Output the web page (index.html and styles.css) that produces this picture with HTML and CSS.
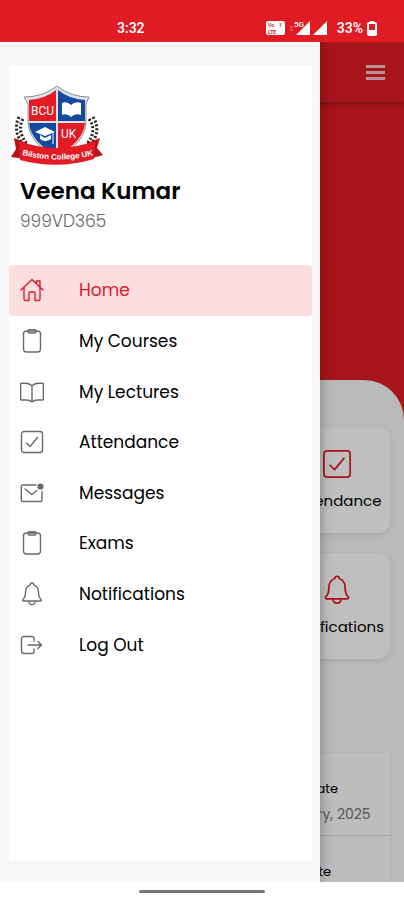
FILE: index.html
```html
<!DOCTYPE html>
<html lang="en">
<head>
    <meta charset="UTF-8">
    <meta name="viewport" content="width=device-width, initial-scale=1">
    <title>Student Portal</title>
    <link rel="stylesheet" href="styles.css">
</head>
<body>
<!-- shared icons -->
<svg class="sprite" aria-hidden="true">
    <symbol id="home" viewBox="0 0 24 24">
        <path d="M1 12 L12 1.500 L23 12 M4 9.500 V21 Q4 22.500 5.500 22.500 H9 V15 Q9 14 10 14 H14 Q15 14 15 15 V22.500 H18.500 Q20 22.500 20 21 V9.500 M16.500 5.500 V3 H20 V9"/>
    </symbol>
    <symbol id="clipboard" viewBox="0 0 24 24">
        <rect x="3.500" y="2" width="17" height="21" rx="3"/>
        <path d="M8 2 Q8 .7 9.500 .7 H14.500 Q16 .7 16 2 V2.500 Q16 4 14.500 4 H9.500 Q8 4 8 2.500 Z"/>
    </symbol>
    <symbol id="book" viewBox="0 0 24 24">
        <path d="M12 6 Q10 3.200 5 3.200 H1.500 Q.6 3.200 .6 4 V19 Q.6 20 1.500 20 H6 Q10 20 12 22 Q14 20 18 20 H22.500 Q23.400 20 23.400 19 V4 Q23.400 3.200 22.500 3.200 H19 Q14 3.200 12 6 V22"/>
    </symbol>
    <symbol id="check" viewBox="0 0 24 24">
        <rect x="1.500" y="1.500" width="21" height="21" rx="2.500"/>
        <path d="M6.500 13 L10 16.500 L17.500 7.500"/>
    </symbol>
    <symbol id="mail" viewBox="0 0 24 24">
        <path d="M16 4 H2.500 Q1.300 4 1.300 5.200 V19 Q1.300 20.500 2.800 20.500 H20.500 Q22 20.500 22 19 V10.500 M5 8 L11.700 13.500 L17 9.500"/>
        <circle cx="20.500" cy="5.500" r="2.400" fill="currentColor"/>
    </symbol>
    <symbol id="bell" viewBox="0 0 24 24">
        <path d="M10.200 2.800 Q10.200 1 12 1 Q13.800 1 13.800 2.800 Q18.500 4.500 18.500 10 Q18.500 15.500 21 17.300 Q21.500 19 20.500 19 H3.500 Q2.500 19 3 17.300 Q5.500 15.500 5.500 10 Q5.500 4.500 10.200 2.800 Z M8.700 19 Q8.900 22.500 12 22.500 Q15.100 22.500 15.300 19"/>
    </symbol>
    <symbol id="logout" viewBox="0 0 24 24">
        <path d="M14 8 V5.500 Q14 3.500 12 3.500 H4 Q1.500 3.500 1.500 6 V18 Q1.500 20.500 4 20.500 H12 Q14 20.500 14 18.500 V16 M8 12 H21.500 M18 8.500 L21.500 12 L18 15.500"/>
    </symbol>
</svg>

<div class="phone">
    <div class="status">
        <span class="time">3:32</span>
        <svg class="signals" viewBox="0 0 64 18" aria-hidden="true">
            <rect x="1" y="2" width="19" height="14" rx="2" fill="#fff"/>
            <g fill="#e01b24" font-size="5" font-weight="700">
                <text x="3" y="8">Vo</text>
                <text x="14" y="8">1</text>
                <text x="3" y="15">LTE</text>
            </g>
            <path d="M25 8h3M25 11h3" stroke="#f0858a"/>
            <path d="M45 2V16H31Z M62 2V16H48Z" fill="#fff"/>
            <text x="29" y="8" fill="#fff" font-size="8">5G</text>
        </svg>
        <span class="percent">33%</span>
        <svg class="battery" viewBox="0 0 10 15" aria-hidden="true">
            <path d="M3 0h4v2h-4z M1 9h8v5h-8z" fill="#fff"/>
            <rect x="1" y="2" width="8" height="12" rx="1" fill="none" stroke="#fff" stroke-width="2"/>
        </svg>
    </div>

    <div class="screen">
        <header class="topbar">
            <button class="menu" type="button" aria-label="Menu"><i></i><i></i><i></i></button>
        </header>
        <main class="sheet">
            <div class="tiles">
                <a class="tile" href="#"><svg><use href="#check"/></svg>Attendance</a>
                <a class="tile" href="#"><svg><use href="#bell"/></svg>Notifications</a>
            </div>
            <dl class="dates">
                <div class="date">
                    <dt>Start Date</dt>
                    <dd>January, 2025</dd>
                </div>
                <div class="date">
                    <dt>End Date</dt>
                </div>
            </dl>
        </main>
        <div class="scrim"></div>

        <aside class="drawer">
            <div class="panel">
                <svg class="logo" viewBox="0 0 92 80" role="img" aria-label="Bilston College UK">
                    <!-- laurel -->
                    <g fill="none" stroke="#222" stroke-width="3" stroke-dasharray="2 2">
                        <path d="M8 31 Q1 45 13 60"/>
                        <path d="M12 33 Q5 45 17 59"/>
                        <path d="M82 31 Q91 45 79 60"/>
                        <path d="M78 33 Q87 45 75 59"/>
                    </g>
                    <!-- shield -->
                    <path d="M46 0 Q60 11 78 11 L75 18 V34 Q75 57 46 72 Q17 57 17 34 V18 L13 11 Q32 11 46 0Z" fill="#dfe1e5" stroke="#8b9097"/>
                    <path d="M45 4 Q34 13 18 14 V35 H45Z" fill="#e31b25"/>
                    <path d="M47 4 Q58 13 74 14 V35 H47Z" fill="#134a9f"/>
                    <path d="M18 37 H45 V69 Q20 56 18 37Z" fill="#134a9f"/>
                    <path d="M47 37 H74 Q72 56 47 69Z" fill="#e31b25"/>
                    <text x="20" y="29" class="crest">BCU</text>
                    <text x="50" y="52" class="crest">UK</text>
                    <path d="M51 17 Q56 15 60 19 Q64 15 70 17 V29 Q64 27 60 31 Q56 27 51 29Z" fill="#fff"/>
                    <path d="M24 46 L34 41 L44 46 L34 50Z M29 49 L34 52 L40 49 V53 Q34 57 29 53Z" fill="#fff"/>
                    <path d="M42 47 V58" stroke="#fff"/>
                    <!-- ribbon -->
                    <path d="M3 52 L16 57 L14 73 L0 71 L5 63Z M89 52 L76 57 L78 73 L92 69 L86 62Z" fill="#b9141c"/>
                    <path d="M8 55 Q46 69 84 55 L83 73 Q46 84 9 74Z" fill="#e31b25"/>
                    <path id="arc" d="M11 69 Q46 78 83 69" fill="none"/>
                    <text class="motto"><textPath href="#arc">Bilston College UK</textPath></text>
                </svg>
                <h1 class="name">Veena Kumar</h1>
                <p class="number">999VD365</p>
                <nav class="links">
                    <a class="current" href="#"><svg><use href="#home"/></svg>Home</a>
                    <a href="#"><svg><use href="#clipboard"/></svg>My Courses</a>
                    <a href="#"><svg><use href="#book"/></svg>My Lectures</a>
                    <a href="#"><svg><use href="#check"/></svg>Attendance</a>
                    <a href="#"><svg><use href="#mail"/></svg>Messages</a>
                    <a href="#"><svg><use href="#clipboard"/></svg>Exams</a>
                    <a href="#"><svg><use href="#bell"/></svg>Notifications</a>
                    <a href="#"><svg><use href="#logout"/></svg>Log Out</a>
                </nav>
            </div>
        </aside>
    </div>
    <div class="gesture"><i></i></div>
</div>
</body>
</html>
```
FILE: styles.css
```css
* {
    margin: 0;
    padding: 0;
    box-sizing: border-box;
}

body {
    font-family: Poppins, Inter, "Liberation Sans", sans-serif;
    font-weight: 400;
    color: #000;
    background-color: #fff;
}

a {
    color: inherit;
    text-decoration: none;
}

.sprite {
    position: absolute;
    width: 0;
    height: 0;
}

.phone {
    display: flex;
    flex-direction: column;
    height: 100vh;
}

/* status bar */
.status {
    flex: none;
    display: flex;
    align-items: center;
    height: 42px;
    padding: 14px 27px 0 117px;
    background-color: #e01b24;
    color: #fff;
    font-family: Roboto, sans-serif;
    font-size: 14px;
    font-weight: 500;
}

.time {
    margin-right: auto;
}

.signals {
    width: 64px;
    height: 18px;
    margin-right: 8px;
}

.battery {
    width: 10px;
    height: 15px;
    margin-left: 4px;
}

/* page behind the drawer */
.screen {
    position: relative;
    flex: 1;
    display: flex;
    flex-direction: column;
    background-color: #e01b24;
    overflow: hidden;
}

.topbar {
    flex: none;
    display: flex;
    align-items: center;
    justify-content: flex-end;
    height: 60px;
    padding: 0 19px;
    box-shadow: 0 2px 4px rgba(0, 0, 0, .3);
}

.menu {
    display: grid;
    gap: 3px;
    border: 0;
    background: none;
}

.menu i {
    width: 19px;
    height: 3px;
    background-color: #f6c4c7;
}

.sheet {
    flex: 1 0 auto;
    margin-top: 278px;
    padding: 47px 14px 0;
    background-color: #f8f8f8;
    border-radius: 40px 40px 0 0;
}

.tiles {
    display: grid;
    grid-template-columns: repeat(3, 1fr);
    gap: 20px 30px;
}

.tile {
    grid-column: 3;
    display: flex;
    flex-direction: column;
    align-items: center;
    gap: 10px;
    height: 106px;
    padding-top: 22px;
    border-radius: 12px;
    background-color: #fff;
    box-shadow: 0 2px 6px rgba(0, 0, 0, .1);
    font-size: 15px;
    line-height: 24px;
}

.tile svg {
    width: 30px;
    height: 30px;
    color: #e01b24;
}

.tile svg,
.links svg {
    fill: none;
    stroke: currentColor;
    stroke-width: 1.4;
    stroke-linecap: round;
    stroke-linejoin: round;
}

.dates {
    margin-top: 94px;
    background-color: #fcfcfc;
    box-shadow: 0 0 4px rgba(0, 0, 0, .06);
}

.date {
    padding: 24px 0 8px 259px;
    border-bottom: 1px solid #ddd;
    white-space: nowrap;
}

.date:last-child {
    border: 0;
}

.date dt {
    font-size: 13px;
    line-height: 24px;
}

.date dd {
    color: #777;
    font-size: 14px;
    line-height: 26px;
}

.scrim {
    position: absolute;
    inset: 0;
    background-color: rgba(0, 0, 0, .25);
}

/* drawer */
.drawer {
    position: absolute;
    top: 0;
    bottom: 0;
    left: 0;
    display: flex;
    width: 320px;
    max-width: 85vw;
    padding: 23px 8px 21px 9px;
    background-color: #f7f7f7;
    box-shadow: 0 0 12px rgba(0, 0, 0, .35);
}

.panel {
    flex: 1;
    padding-top: 21px;
    background-color: #fff;
}

.logo {
    display: block;
    width: 92px;
    height: 80px;
    margin-left: 2px;
}

.crest {
    fill: #fff;
    font-family: Roboto, sans-serif;
    font-size: 12px;
}

.motto {
    fill: #fff;
    font-family: "Liberation Sans", sans-serif;
    font-size: 8px;
    font-weight: 700;
}

.name {
    margin: 9px 0 0 11px;
    font-size: 23px;
    font-weight: 600;
    line-height: 32px;
}

.number {
    margin-left: 11px;
    color: #666;
    font-size: 17px;
    font-weight: 300;
    line-height: 28px;
}

/* eight equal rows */
.links {
    display: grid;
    grid-auto-rows: 1fr;
    height: 405px;
    margin-top: 30px;
}

.links a {
    display: flex;
    align-items: center;
    gap: 35px;
    padding-left: 11px;
    border-radius: 4px;
    font-size: 17px;
}

.links svg {
    width: 24px;
    height: 24px;
    color: #666b73;
}

.links .current,
.links .current svg {
    color: #dc1b2a;
}

.links .current {
    background-color: #fcdde0;
}

/* home gesture bar */
.gesture {
    flex: none;
    display: flex;
    justify-content: center;
    height: 18px;
    padding-top: 8px;
}

.gesture i {
    width: 126px;
    height: 3px;
    border-radius: 2px;
    background-color: #777;
}
```
